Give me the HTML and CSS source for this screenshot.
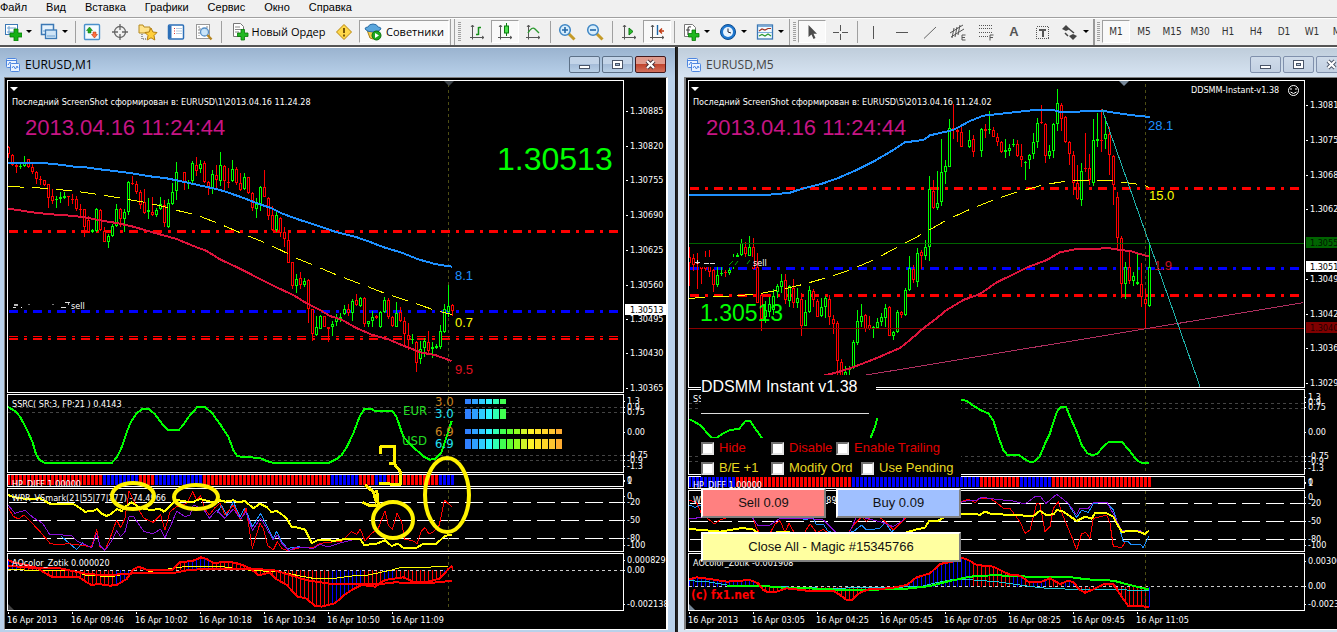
FILE: index.html
```
<!DOCTYPE html>
<html lang="ru">
<head>
<meta charset="utf-8">
<title>EURUSD</title>
<link rel="stylesheet" href="styles.css">
</head>
<body>
<nav class="menu">
  <a href="#">Файл</a><a href="#">Вид</a><a href="#">Вставка</a><a href="#">Графики</a><a href="#">Сервис</a><a href="#">Окно</a><a href="#">Справка</a>
</nav>
<div class="toolbar">
  <button class="tool drop" aria-label="Новый график"><svg width="18" height="18" viewBox="0 0 18 18"><rect x="1.500" y="1.500" width="12" height="10" fill="#fff" stroke="#3b78b5"/><path d="M3 5h9M3 9h9M5 3v8" stroke="#6ba0d0"/><path d="M10 6h4v4h4v4h-4v4h-4v-4H6v-4h4z" fill="#16b016" stroke="#067806" stroke-width=".8"/></svg><i class="caret"></i></button>
  <button class="tool drop wide" aria-label="Профили"><svg width="18" height="18" viewBox="0 0 18 18"><rect x="1.500" y="1.500" width="12" height="10" fill="#e6f2fc" stroke="#3b78b5" stroke-width="1.500"/><path d="M3 8h9" stroke="#6ba0d0"/><rect x="5.500" y="7" width="11" height="8.500" fill="#cfe4f6" stroke="#3b78b5" stroke-width="1.300"/><path d="M7 13h8" stroke="#6ba0d0"/></svg><i class="caret"></i></button>
  <i class="sep"></i>
  <button class="tool" aria-label="Обзор рынка"><svg width="18" height="18" viewBox="0 0 18 18"><rect x="1.500" y="1.500" width="15" height="15" rx="1" fill="#f4faff" stroke="#4a90cc" stroke-width="1.400"/><path d="M6.500 4l3 3.500H8V10H5V7.500H3.500z" fill="#22a822" stroke="#087008" stroke-width=".5"/><path d="M11.500 15l-3-3.500H10V9h3v2.500h1.500z" fill="#ff7040" stroke="#b02800" stroke-width=".5"/></svg></button>
  <button class="tool" aria-label="Окно данных"><svg width="18" height="18" viewBox="0 0 18 18" fill="none" stroke="#666"><circle cx="9" cy="9" r="5.500" stroke-width="1.300"/><path d="M9 1v6M9 11v6M1 9h6M11 9h6" stroke-width="1.300"/></svg></button>
  <button class="tool" aria-label="Навигатор"><svg width="20" height="20" viewBox="0 0 20 20"><path d="M1 3h4l1 2h6v6H1z" fill="#ffe38a" stroke="#b58a20"/><path d="M4 12v5h5" fill="none" stroke="#444" stroke-dasharray="1 1"/><path d="M13 6l1.900 4 4.100.5-3 3 .8 4.500-3.800-2.200L9.200 18l.8-4.500-3-3 4.100-.5z" fill="#ffcf3c" stroke="#b57f10"/></svg></button>
  <button class="tool" aria-label="Терминал"><svg width="18" height="18" viewBox="0 0 18 18"><rect x="1.500" y="2" width="15" height="14" rx="1" fill="#fff" stroke="#2c6fb8" stroke-width="1.500"/><path d="M2 2.500h2.500v13H2z" fill="#2c6fb8"/><path d="M7 5.500h1M7 8h1M7 10.500h1" stroke="#d33"/><path d="M9 5.500h6M9 8h6M9 10.500h6" stroke="#b8cce0"/></svg></button>
  <button class="tool" aria-label="Тестер"><svg width="18" height="18" viewBox="0 0 18 18"><rect x="1.500" y="1.500" width="13" height="14" fill="#fff" stroke="#999"/><path d="M4 3v10M4 6h8M12 3v5" stroke="#888" stroke-dasharray="2 1"/><circle cx="9.500" cy="9" r="4" fill="#bfe0f8" fill-opacity=".85" stroke="#5790c8" stroke-width="1.300"/><path d="M12.500 12l4 4.500" stroke="#b58520" stroke-width="2.400"/></svg></button>
  <i class="sep"></i>
  <button class="tool order"><svg width="18" height="18" viewBox="0 0 18 18"><path d="M2.500.5h7l3 3v10h-10z" fill="#fff" stroke="#777"/><path d="M4 4h5M4 6.500h7M4 9h4" stroke="#888"/><path d="M10 6.500h3.500V10H17v3.500h-3.500V17H10v-3.500H6.500V10H10z" fill="#20b820" stroke="#067806" stroke-width=".8"/></svg>Новый Ордер</button>
  <button class="tool small" aria-label="MetaEditor"><svg width="18" height="18" viewBox="0 0 18 18"><path d="M9 1.500L16.500 9 9 16.500 1.500 9z" fill="#ffd84a" stroke="#b8860b" stroke-linejoin="round"/><path d="M9 5v5M9 11.500v2" stroke="#6b4a00" stroke-width="1.800"/></svg></button>
  <button class="tool experts on"><svg width="18" height="18" viewBox="0 0 18 18"><path d="M3 7h12l-3 8q-3 2-6 0z" fill="#f2cc4d" stroke="#a87f18"/><path d="M1 6q0-2 3-2 1-3 5-3t5 3q3 0 3 2-2 3-8 3T1 6z" fill="#5aa6dc" stroke="#2c6fa8"/><circle cx="12.500" cy="12.500" r="4.500" fill="#1fa81f" stroke="#0a700a"/><path d="M11 10l4 2.500-4 2.500z" fill="#fff"/></svg>Советники</button>
  <i class="bars"></i><i class="grip"></i>
  <button class="tool" aria-label="Бары"><svg width="18" height="18" viewBox="0 0 18 18" fill="none" stroke="#555"><path d="M4.500 2v14.500M2 14.500h14M3 4l1.500-2L6 4M14 13l2 1.500-2 1.500"/><path d="M10.500 4v8M8 11.500h2.500M10.500 4.500H13" stroke="#16901a" stroke-width="1.500"/></svg></button>
  <button class="tool on" aria-label="Свечи"><svg width="18" height="18" viewBox="0 0 18 18" fill="none" stroke="#555"><path d="M4.500 2v14.500M2 14.500h14M3 4l1.500-2L6 4M14 13l2 1.500-2 1.500"/><path d="M10.500 0v13" stroke="#0b7a10"/><rect x="8.500" y="3" width="4" height="7" fill="#4fe04f" stroke="#0b7a10"/></svg></button>
  <button class="tool" aria-label="Линия"><svg width="18" height="18" viewBox="0 0 18 18" fill="none" stroke="#555"><path d="M4.500 2v14.500M2 14.500h14M3 4l1.500-2L6 4M14 13l2 1.500-2 1.500"/><path d="M4 10q4-7 7-4l4 4" stroke="#2c9a30" stroke-width="1.400"/></svg></button>
  <i class="sep"></i>
  <button class="tool" aria-label="Увеличить"><svg width="18" height="18" viewBox="0 0 18 18"><path d="M10.500 10.500l6 6" stroke="#c49a28" stroke-width="3"/><circle cx="7" cy="7" r="5.300" fill="#d8eefc" stroke="#3f86c4" stroke-width="1.500"/><path d="M7 4v6M4 7h6" stroke="#2468a8" stroke-width="1.600"/></svg></button>
  <button class="tool" aria-label="Уменьшить"><svg width="18" height="18" viewBox="0 0 18 18"><path d="M10.500 10.500l6 6" stroke="#c49a28" stroke-width="3"/><circle cx="7" cy="7" r="5.300" fill="#d8eefc" stroke="#3f86c4" stroke-width="1.500"/><path d="M4 7h6" stroke="#2468a8" stroke-width="1.600"/></svg></button>
  <i class="sep"></i>
  <button class="tool" aria-label="Автопрокрутка"><svg width="18" height="18" viewBox="0 0 18 18" fill="none" stroke="#555"><path d="M4.500 2v14.500M2 14.500h14M3 4l1.500-2L6 4M14 13l2 1.500-2 1.500"/><path d="M9 5l4 3.500L9 12z" fill="#2fc02f" stroke="#0b7a10"/></svg></button>
  <button class="tool on" aria-label="Сдвиг графика"><svg width="18" height="18" viewBox="0 0 18 18" fill="none" stroke="#555"><path d="M4.500 2v14.500M2 14.500h14M3 4l1.500-2L6 4M14 13l2 1.500-2 1.500"/><path d="M9.500 2v10" stroke="#1c68a8" stroke-width="1.400"/><path d="M16 8h-4M14 5.500L11.500 8l2.500 2.500" stroke="#c03810" stroke-width="1.400"/></svg></button>
  <i class="sep"></i>
  <button class="tool drop wide" aria-label="Индикаторы"><svg width="18" height="18" viewBox="0 0 18 18"><path d="M2.500 1.500h8l3 3v9h-11z" fill="#fff" stroke="#777"/><path d="M9 4q-3-1-3 2v6M4 7h4" fill="none" stroke="#444" stroke-width="1.200"/><path d="M10 7h3.500v3.500H17V14h-3.500v3.500H10V14H6.500v-3.500H10z" fill="#20b820" stroke="#067806" stroke-width=".8"/></svg><i class="caret"></i></button>
  <button class="tool drop wide" aria-label="Периоды"><svg width="18" height="18" viewBox="0 0 18 18"><circle cx="9" cy="9" r="7.500" fill="#1f78d0" stroke="#0c4c90"/><circle cx="9" cy="9" r="5" fill="#e8f4ff"/><path d="M9 5.500V9l3 1" fill="none" stroke="#223"/></svg><i class="caret"></i></button>
  <button class="tool drop wide" aria-label="Шаблоны"><svg width="18" height="18" viewBox="0 0 18 18"><rect x="1.500" y="2" width="15" height="14" fill="#f4faff" stroke="#3b78b5" stroke-width="1.300"/><path d="M2 3.500h14M2 9.500h14" stroke="#7db0dc"/><path d="M3 8l3-2 3 1 3-1.500h3" fill="none" stroke="#a03020" stroke-width="1.200"/><path d="M3 13l3-1.500 3 1.500 3-2 3 2" fill="none" stroke="#2c9a30" stroke-width="1.200"/></svg><i class="caret"></i></button>
  <i class="bar"></i><i class="grip"></i>
  <button class="tool on" aria-label="Курсор"><svg width="18" height="18" viewBox="0 0 18 18"><path d="M5.500 2v12l3-2.500 2 4.500 2-1-2-4.200h3.500z" fill="#4c4c4c"/></svg></button>
  <button class="tool" aria-label="Перекрестие"><svg width="18" height="18" viewBox="0 0 18 18" stroke="#555"><path d="M9.500 2v6M9.500 11v6M2 9.500h6M11 9.500h6"/></svg></button>
  <i class="sep"></i>
  <button class="tool" aria-label="Вертикальная линия"><svg width="18" height="18" viewBox="0 0 18 18" stroke="#555"><path d="M8.500 3v13"/></svg></button>
  <button class="tool" aria-label="Горизонтальная линия"><svg width="18" height="18" viewBox="0 0 18 18" stroke="#555"><path d="M3 9.500h12"/></svg></button>
  <button class="tool" aria-label="Трендовая линия"><svg width="18" height="18" viewBox="0 0 18 18" stroke="#666"><path d="M3 15.500L15 4"/></svg></button>
  <button class="tool" aria-label="Канал"><svg width="18" height="18" viewBox="0 0 18 18" fill="none" stroke="#555"><path d="M1 10L14 2M2 14L15 6M5 5L3 15M8 4L6 14M11 2L9 12"/><path d="M16.500 12H13v5h3.500M13 14.500h3"/></svg></button>
  <button class="tool" aria-label="Фибоначчи"><svg width="18" height="18" viewBox="0 0 18 18" fill="none" stroke="#555"><path d="M2 2.500h14M2 5.500h14M2 9.500h14M2 13.500h9" stroke-dasharray="1 1"/><path d="M16.500 12H13v5.500M13 14.500h3"/></svg></button>
  <button class="tool letter" aria-label="Текст">A</button>
  <button class="tool" aria-label="Метка"><svg width="18" height="18" viewBox="0 0 18 18" fill="none" stroke="#555" shape-rendering="crispEdges"><rect x="3.500" y="3.500" width="12" height="12" stroke-dasharray="1 1"/><path d="M6 7h7M9.500 6v8" stroke-width="2"/></svg></button>
  <button class="tool drop wide" aria-label="Стрелки"><svg width="18" height="18" viewBox="0 0 18 18"><path d="M1 6l4-4 4 4-4 2zM8 13l4-2 4 2-4 4z" fill="#444"/><path d="M4 10l3 3M8 6l5 4" stroke="#444" stroke-width="1.500"/></svg><i class="caret"></i></button>
  <i class="thick"></i><i class="grip"></i>
  <button class="tool tf on">M1</button><button class="tool tf">M5</button><button class="tool tf">M15</button><button class="tool tf">M30</button><button class="tool tf">H1</button><button class="tool tf">H4</button><button class="tool tf">D1</button><button class="tool tf">W1</button><button class="tool tf">MN</button>
</div>

<main class="desk">
  <section class="win active">
    <header class="title">
      <svg width="16" height="16" viewBox="0 0 16 16" fill="#eaf3ff" stroke="#4d86e0"><rect x="1.500" y="1.500" width="10" height="9" rx="1"/><path d="M2 3.500h9M3 8l2-3 2 3 2-2" fill="none"/><rect x="5.500" y="6.500" width="9" height="8" rx="1"/><path d="M7 11l1.500-2 2 3L12 9l1 2" fill="none"/></svg>
      <h2>EURUSD,M1</h2>
      <button class="cap" aria-label="Свернуть"><svg width="13" height="11" viewBox="0 0 13 11"><rect x="1.500" y="6.500" width="10" height="3" fill="#fff" stroke="#4a5568"/></svg></button>
      <button class="cap" aria-label="Развернуть"><svg width="13" height="11" viewBox="0 0 13 11"><rect x="1.500" y="1.500" width="10" height="8" fill="#fff" stroke="#4a5568"/><rect x="4.500" y="4.500" width="4" height="2" fill="#9db6d2" stroke="#4a5568"/></svg></button>
      <button class="cap close" aria-label="Закрыть"><svg width="13" height="11" viewBox="0 0 13 11"><path d="M3 2l7 7M10 2L3 9" stroke="#4a3038" stroke-width="4"/><path d="M3 2l7 7M10 2L3 9" stroke="#fff" stroke-width="2.200"/></svg></button>
    </header>
    <div class="chart">
      <div class="pane price"><svg class="plot" id="l1"></svg><svg class="axis" id="l1a"></svg></div>
      <div class="pane ssrc"><svg class="plot" id="l2"></svg><svg class="axis" id="l2a"></svg></div>
      <div class="pane diff"><svg class="plot" id="l3"></svg><svg class="axis" id="l3a"></svg></div>
      <div class="pane wpr"><svg class="plot" id="l4"></svg><svg class="axis" id="l4a"></svg></div>
      <div class="pane ao"><svg class="plot" id="l5"></svg><svg class="axis" id="l5a"></svg></div>
      <div class="times"><time>16 Apr 2013</time><time>16 Apr 09:46</time><time>16 Apr 10:02</time><time>16 Apr 10:18</time><time>16 Apr 10:34</time><time>16 Apr 10:50</time><time>16 Apr 11:09</time></div>
      <svg class="overlay" id="marks"></svg>
    </div>
  </section>
  <section class="win idle">
    <header class="title">
      <svg width="16" height="16" viewBox="0 0 16 16" fill="#eaf3ff" stroke="#4d86e0"><rect x="1.500" y="1.500" width="10" height="9" rx="1"/><path d="M2 3.500h9M3 8l2-3 2 3 2-2" fill="none"/><rect x="5.500" y="6.500" width="9" height="8" rx="1"/><path d="M7 11l1.500-2 2 3L12 9l1 2" fill="none"/></svg>
      <h2>EURUSD,M5</h2>
      <button class="cap" aria-label="Свернуть"><svg width="13" height="11" viewBox="0 0 13 11"><rect x="1.500" y="6.500" width="10" height="3" fill="#fff" stroke="#4a5568"/></svg></button>
      <button class="cap" aria-label="Развернуть"><svg width="13" height="11" viewBox="0 0 13 11"><rect x="1.500" y="1.500" width="10" height="8" fill="#fff" stroke="#4a5568"/><rect x="4.500" y="4.500" width="4" height="2" fill="#c2d0e0" stroke="#4a5568"/></svg></button>
      <button class="cap" aria-label="Закрыть"><svg width="13" height="11" viewBox="0 0 13 11"><path d="M3 2l7 7M10 2L3 9" stroke="#4a5568" stroke-width="4"/><path d="M3 2l7 7M10 2L3 9" stroke="#fff" stroke-width="2.200"/></svg></button>
    </header>
    <div class="chart">
      <div class="pane price"><svg class="plot" id="r1"></svg><svg class="axis" id="r1a"></svg></div>
      <div class="pane ssrc"><svg class="plot" id="r2"></svg><svg class="axis" id="r2a"></svg></div>
      <div class="pane diff"><svg class="plot" id="r3"></svg><svg class="axis" id="r3a"></svg></div>
      <div class="pane wpr"><svg class="plot" id="r4"></svg><svg class="axis" id="r4a"></svg></div>
      <div class="pane ao"><svg class="plot" id="r5"></svg><svg class="axis" id="r5a"></svg></div>
      <div class="times"><time>16 Apr 2013</time><time>16 Apr 03:05</time><time>16 Apr 04:25</time><time>16 Apr 05:45</time><time>16 Apr 07:05</time><time>16 Apr 08:25</time><time>16 Apr 09:45</time><time>16 Apr 11:05</time></div>
      <form class="trade">
        <h3>DDSMM Instant v1.38</h3>
        <div class="rule"></div>
        <div class="opts">
          <div class="row red"><label class="c1"><input type="checkbox">Hide</label><label class="c2"><input type="checkbox">Disable</label><label><input type="checkbox">Enable Trailing</label></div>
          <div class="row gold"><label class="c1"><input type="checkbox">B/E +1</label><label class="c3"><input type="checkbox">Modify Ord</label><label><input type="checkbox">Use Pending</label></div>
        </div>
        <div class="deal"><button type="button" class="sell">Sell 0.09</button><button type="button" class="buy">Buy 0.09</button></div>
        <button type="button" class="all">Close All - Magic #15345766</button>
      </form>
    </div>
  </section>
</main>
<script src="charts.js"></script>
</body>
</html>
```

FILE: styles.css
```
* { box-sizing: border-box; }
html, body { height: 100%; }
body {
  margin: 0;
  display: flex;
  flex-direction: column;
  overflow: hidden;
  background: #3c3c3c;
  font-family: "Open Sans", "Noto Sans", sans-serif;
  font-size: 12px;
  color: #000;
}
button { font: inherit; color: inherit; padding: 0; margin: 0; border: 0; background: none; }

.menu {
  flex: none;
  height: 18px;
  display: flex;
  gap: 19px;
  background: #f0f0f0;
  border-bottom: 1px solid #a0a0a0;
  font-family: "Liberation Sans", sans-serif;
  font-size: 11px;
  line-height: 15px;
}
.menu a { color: #000; text-decoration: none; white-space: nowrap; }

.toolbar {
  flex: none;
  height: 29px;
  display: flex;
  align-items: stretch;
  padding: 0 0 0 1px;
  overflow: hidden;
  background: #f0f0f0;
  border-top: 1px solid #fff;
  border-bottom: 2px solid #555;
}
.tool {
  flex: none;
  width: 28px;
  margin: 1px 0 2px;
  display: flex;
  align-items: center;
  justify-content: center;
}
.tool.on { background: #f9f9f9; border: 1px solid; border-color: #a0a0a0 #fff #fff #a0a0a0; }
.tool.drop { width: 34px; gap: 4px; }
.tool.wide { width: 37px; }
.tool.small { width: 24px; }
.tool.order { width: 108px; gap: 3px; font-size: 11px; white-space: nowrap; }
.tool.experts { width: 90px; margin-left: 3px; gap: 4px; font-size: 11px; }
.tool.letter { font: bold 13px "Liberation Sans", sans-serif; color: #555; }
.tool.tf { font: 10px "DejaVu Sans Condensed", "DejaVu Sans", sans-serif; color: #333; }
.caret { border: 3px solid transparent; border-top-color: #000; border-bottom: 0; }
.sep { flex: none; width: 1px; margin: 2px 2px 2px 3px; background: #a0a0a0; }
.bars { flex: none; width: 5px; margin: 0 1px; border: 1px solid #a0a0a0; border-width: 0 1px; }
.bar { flex: none; width: 1px; margin: 0 1px; background: #a0a0a0; }
.thick { flex: none; width: 2px; margin: 0; background: #999; }
.grip { flex: none; width: 3px; margin: 3px 2px; background: repeating-linear-gradient(#a0a0a0 0 1px, #f0f0f0 1px 2px); }

.desk { flex: 1; min-height: 0; display: grid; grid-template-columns: 676fr 661fr; grid-template-rows: minmax(0, 1fr); }
.win { display: flex; flex-direction: column; min-width: 0; }
.active { background: #b9d1ea; border-right: 1px solid #111; padding: 0 7px 0 4px; }
.idle { background: #d7e4f2; border-left: 2px solid #222; padding: 0 8px 0 6px; width: calc(100% + 20px); }
.title {
  flex: none;
  height: 30px;
  display: flex;
  align-items: center;
  gap: 2px;
  border-top: 1px solid #fff;
}
.active .title { background: linear-gradient(#9ab3cf, #b9d1ea); margin: 0 -7px 0 -4px; padding: 4px 9px 0 5px; }
.idle .title { background: linear-gradient(#bfcddb, #d7e4f2); margin: 0 -8px 0 -6px; padding: 4px 10px 0 8px; }
.title h2 { flex: 1; margin: 0; padding-left: 2px; font-size: 12px; line-height: 16px; font-weight: 400; }
.idle h2 { color: #444; }
.cap {
  width: 31px;
  height: 17px;
  display: grid;
  place-items: center;
  border: 1px solid #5d7188;
  border-radius: 2px;
  background: linear-gradient(#c3d4e8 50%, #a5bcd8 50%, #b8cfe6);
}
.idle .cap { border-color: #8090ac; background: linear-gradient(#cfdbe9, #c2d0e2); }
.cap.close { border-color: #43191d; background: linear-gradient(#e09b8e 50%, #c1452f 50%, #d2705c); }

.chart {
  position: relative;
  display: flex;
  flex-direction: column;
  gap: 1px;
  padding: 2px 0 0 2px;
  background: #000;
  border-top: 1px solid #808080;
  border-left: 1px solid #808080;
  border-right: 2px solid #fff;
  border-bottom: 1px solid #fff;
}
.idle .chart { border-left-width: 2px; }
.pane { flex: none; display: grid; grid-template-columns: minmax(0, 1fr) 42px; grid-template-rows: minmax(0, 1fr); }
.plot { display: block; width: 100%; height: 100%; min-height: 0; border: 1px solid #fff; }
.axis { display: block; width: 42px; height: 100%; min-height: 0; overflow: visible; }
.active .price { height: 313px; }
.active .ssrc { height: 79px; }
.active .diff { height: 13px; }
.active .wpr { height: 64px; }
.idle .price { height: 308px; }
.idle .ssrc { height: 86px; }
.idle .diff { height: 13px; }
.idle .wpr { height: 62px; }
.ao { height: 58px; }
.times { flex: none; display: flex; height: 17px; }
.times time {
  flex: none;
  width: 64px;
  padding-top: 2px;
  white-space: nowrap;
  color: #fff;
  font: 9px/12px "DejaVu Sans Condensed", "DejaVu Sans", sans-serif;
  background: linear-gradient(#fff, #fff) 1px 0 / 1px 2px no-repeat;
}
.overlay { position: absolute; left: 0; top: 0; width: 100%; height: 100%; pointer-events: none; }

svg text { font-family: "Liberation Sans", sans-serif; }
svg .tiny { font: 9px "DejaVu Sans Condensed", "DejaVu Sans", sans-serif; fill: #fff; }
svg .meter { font: 13px "DejaVu Sans Condensed", "DejaVu Sans", sans-serif; }
svg .copy { font: bold 12px "DejaVu Sans Condensed", "DejaVu Sans", sans-serif; fill: #f00; }
svg .tag { font-size: 13px; }
svg .clock { font-size: 22px; fill: #c71585; }
svg .huge { font-size: 32px; fill: #0f0; }
svg .big { font-size: 23px; fill: #0f0; }

.trade { position: absolute; left: 15px; top: 297px; width: 260px; font: 13px/20px "Liberation Sans", sans-serif; color: #111; }
.trade h3 { margin: 0; width: 175px; height: 19px; font-size: 16px; line-height: 24px; font-weight: 400; color: #fff; background: #000; white-space: nowrap; }
.rule { height: 24px; background: linear-gradient(#ddd, #ddd) 0 19px / 168px 1px no-repeat #000; }
.opts { margin-top: 20px; height: 39px; background: #000; }
.row { display: flex; }
.row label { display: flex; align-items: center; gap: 5px; white-space: nowrap; }
.row .c1 { width: 70px; }
.row .c2 { width: 65px; }
.row .c3 { width: 90px; }
.row input { appearance: none; width: 13px; height: 13px; margin: 0; background: #fff; border: 2px solid; border-color: #707070 #e4e4e4 #e4e4e4 #707070; }
.red { color: #e00000; }
.gold { color: #e8d820; }
.deal { display: flex; gap: 10px; margin-top: 11px; }
.deal button, .all { flex: 1; width: 100%; height: 30px; border: 2px solid; border-color: #fff #808080 #808080 #fff; }
.sell { background: #ff8080; }
.buy { background: #a0c0ff; }
.all { margin-top: 14px; background: #ffffa0; }
```

FILE: charts.js
```
const NS = "http://www.w3.org/2000/svg";
const STEP = 3; // data points per pixel

function add(parent, tag, attrs, text) {
  const el = document.createElementNS(NS, tag);
  for (const k in attrs) el.setAttribute(k, attrs[k]);
  if (text !== undefined) el.textContent = text;
  parent.appendChild(el);
  return el;
}
function layer(id, ox, oy, bx, by) {
  const g = add(document.getElementById(id), "g", { transform: `translate(${-ox},${-oy})` });
  return { g, bx, by };
}
const parse = s => s.trim().split(/\s+/).map(p => p.split(",").map(Number));
const X = (c, v) => c.bx + v / STEP;
const Y = (c, v) => c.by + v / STEP;
function line(c, s, stroke, w) {
  add(c.g, "polyline", { points: parse(s).map(p => X(c, p[0]) + "," + Y(c, p[1])).join(" "), fill: "none", stroke, "stroke-width": w, "shape-rendering": "crispEdges", "stroke-linejoin": "round" });
}
function at(pts, x) {
  for (let i = 1; i < pts.length; i++) {
    if (x <= pts[i][0]) {
      const [a, b] = [pts[i - 1], pts[i]];
      return a[1] + (b[1] - a[1]) * (x - a[0]) / (b[0] - a[0]);
    }
  }
  return pts[pts.length - 1][1];
}
function dashed(c, s, stroke) {
  const pts = parse(s), end = pts[pts.length - 1][0];
  for (let x = pts[0][0]; x < end; x += 72) {
    const stop = Math.min(x + 53, end), seg = [];
    for (let u = x; u <= stop; u += 6) seg.push(u + "," + at(pts, u));
    if (seg.length > 1) line(c, seg.join(" "), stroke, 1);
  }
}
function hline(c, y, x1, x2, stroke, w, dash) {
  add(c.g, "line", { x1, x2, y1: y, y2: y, stroke, "stroke-width": w, "stroke-dasharray": dash || "none", "shape-rendering": "crispEdges" });
}
function vline(c, x, y1, y2) {
  add(c.g, "line", { x1: x + .5, x2: x + .5, y1, y2, stroke: "#4d4d14", "stroke-dasharray": "3 3", "shape-rendering": "crispEdges" });
}
function rect(c, x, y, width, height, fill) {
  add(c.g, "rect", { x, y, width, height, fill, "shape-rendering": "crispEdges" });
}
function text(c, x, y, t, cls, fill) {
  const el = add(c.g, "text", { x, y, class: cls }, t);
  if (fill) el.style.fill = fill;
}
function candles(c, x0, s) {
  s.trim().split(/\s+/).forEach((t, i) => {
    if (t === "-") return;
    const col = t[0] === "R" ? "#f00" : "#0f0";
    const [h, l, a, b] = t.slice(1).split(",").map(v => Math.round(Y(c, Number(v))));
    const x = x0 + 4 * i;
    rect(c, x, h, 1, Math.max(1, l - h), col);
    if (b - a < 3) rect(c, x - 1, a, 3, Math.max(1, b - a), col);
    else {
      rect(c, x - 1, a, 3, b - a, col);
      rect(c, x, a + 1, 1, b - a - 2, "#000");
    }
  });
}
function runs(s) {
  const out = [];
  s.split(" ").forEach(r => { for (let i = 0; i < parseInt(r.slice(1)); i++) out.push(r[0] === "R" ? "#f00" : "#00f"); });
  return out;
}
function strip(c, x0, y, s) {
  runs(s).forEach((col, i) => rect(c, x0 - 1 + 4 * i, y, 3, 10, col));
}
function hist(c, x0, zero, s, colors) {
  const pts = parse(s), z = Y(c, zero);
  runs(colors).forEach((col, i) => {
    const x = x0 + 4 * i, y = Y(c, at(pts, (x - c.bx) * STEP));
    rect(c, x, Math.min(y, z), 1, Math.abs(y - z), col);
  });
}
function scale(c, x, items) {
  items.forEach(([y, t]) => {
    rect(c, x - 4, y, 2, 1, "#fff");
    text(c, x, y + 3, t, "tiny");
  });
}
function tri(c, x, y, fill, w) {
  add(c.g, "path", { d: `M${x - w} ${y}h${2 * w}l${-w} ${w}z`, fill });
}

/* EURUSD,M1 */
let c = layer("l1", 8, 81, 0, 80);
vline(c, 448, 84, 392);
tri(c, 449, 81, "#3c4248", 5);
hline(c, 231.5, 9, 619, "#f00", 3, "9 6 3 6");
hline(c, 311.5, 9, 619, "#00f", 3, "9 6 3 6");
hline(c, 336.5, 9, 619, "#f00", 1, "9 6 3 6");
hline(c, 339, 9, 619, "#f00", 2, "9 6 3 6");
candles(c, 8, `R198,235,201,222 R222,258,226,255 R252,278,256,262 G253,266,259,262 G228,262,247,257 R237,265,237,262 R252,282,262,277 R272,312,277,297 R288,315,297,299 R299,318,300,314
R312,384,312,353 R328,372,349,362 G348,383,356,361 G336,370,352,358 G337,357,348,355 R347,378,347,350 R343,372,356,358 R347,392,357,386 R372,410,386,388 R387,470,388,440
R407,458,420,455 G447,459,451,456 G384,457,388,452 R387,452,390,450 R441,487,452,485 G463,503,468,487 G432,470,437,469 G373,441,388,437 R385,440,388,418 G387,456,396,418
G303,404,307,395 R288,315,308,311 R303,342,311,335 R330,388,337,375 R327,402,367,398 G355,417,390,395 R350,408,397,405 G384,411,390,406 G351,391,373,388 R360,441,375,430
G357,445,370,440 G308,376,337,373 G246,360,275,334 - R275,331,277,305 G300,327,305,311 G243,308,250,303 R231,288,256,273 G240,280,253,268 R243,308,250,305
R302,346,305,320 G270,342,282,327 R256,324,286,301 G216,317,256,304 R256,335,258,303 R265,325,305,310 G240,305,268,303 R262,315,267,310 R280,333,310,330 G280,330,292,328
R290,342,292,340 R336,393,338,384 G354,413,372,386 G318,392,322,372 R270,350,322,350 R352,420,355,407 R377,452,404,451 G391,455,405,451 R410,470,415,458 R442,500,455,476
R453,550,480,550 R545,628,547,619 G582,638,598,617 R576,627,595,614 G594,621,602,616 R598,728,601,686 R686,782,688,763 G709,767,742,765 G705,747,708,746 R707,741,709,740
R740,785,740,746 G724,767,733,742 G702,738,712,726 G698,725,710,716 G676,706,688,702 R672,707,687,700 G658,723,662,700 R642,678,660,676 G651,680,655,677 R652,740,655,731
G722,742,724,733 G692,742,712,722 R704,717,709,714 G692,743,697,742 G651,700,660,695 R655,716,661,711 R708,740,711,737 G665,742,698,740 R681,727,697,722 R712,795,722,762
R730,810,765,780 G763,792,777,780 R783,876,785,848 G782,852,806,838 G773,832,784,805 R753,820,785,812 G787,833,800,808 G792,806,797,803 G735,807,754,800 G673,760,688,757
G615,710,677,695 R672,707,674,692`);
line(c, "24,248 130,249 160,252 190,255 210,259 250,261 300,268 350,274 390,279 450,289 500,295 540,303 580,312 640,325 670,333 720,350 780,373 810,383 850,402 900,420 950,436 1005,455 1065,470 1105,484 1155,503 1205,518 1255,538 1305,552 1355,560", "#1e90ff", 2);
dashed(c, "24,319 77,322 140,325 168,328 220,333 293,343 365,355 440,368 500,382 530,391 580,403 605,411 655,430 725,460 800,490 862,520 890,535 940,555 1015,587 1085,613 1155,640 1230,665 1300,689 1357,704", "#ff0");
line(c, "24,386 60,391 90,396 140,402 200,406 250,411 300,421 350,429 400,440 440,452 480,463 530,477 580,498 620,513 660,538 720,566 780,597 830,622 880,645 920,670 960,690 990,708 1025,719 1065,742 1115,764 1165,778 1215,799 1265,818 1305,825 1355,843", "#dc143c", 2);
tri(c, 14, 87, "#fff", 4);
text(c, 12, 105, "Последний ScreenShot сформирован в: EURUSD\\1\\2013.04.16 11.24.28", "tiny");
text(c, 25, 135, "2013.04.16 11:24:44", "clock");
text(c, 497, 170, "1.30513", "huge");
text(c, 455, 280, "8.1", "tag", "#1e90ff");
text(c, 455, 327, "0.7", "tag", "#ff0");
text(c, 455, 374, "9.5", "tag", "#e01020");
text(c, 71, 309, "sell", "tiny");
rect(c, 14, 304, 4, 2, "#bbb"); rect(c, 13, 307, 3, 1, "#ddd"); rect(c, 21, 307, 1, 1, "#fff"); rect(c, 28, 304, 2, 1, "#777");
rect(c, 52, 304, 2, 1, "#777"); rect(c, 61, 307, 5, 1, "#ddd"); rect(c, 65, 302, 5, 1, "#ddd"); rect(c, 68, 303, 1, 2, "#bbb");

c = layer("l1a", 624, 80, 0, 80);
scale(c, 630, [[111, "1.30885"], [146, "1.30820"], [180, "1.30755"], [215, "1.30690"], [250, "1.30625"], [285, "1.30560"], [319, "1.30495"], [353, "1.30430"], [388, "1.30365"]]);
rect(c, 625, 304, 41, 11, "#fff");
text(c, 630, 313, "1.30513", "tiny", "#000");

c = layer("l2", 8, 395, 0, 385);
[407.5, 412.5, 455.5, 460.5].forEach(y => hline(c, y, 8, 624, "#444", 1, "3 3"));
vline(c, 448, 396, 472);
line(c, "24,66 45,78 60,95 78,128 97,170 108,207 118,224 135,234 335,234 350,218 365,187 380,142 392,112 410,85 427,72 447,72 465,88 485,115 503,134 537,134 550,120 565,97 592,66 615,66 635,83 660,117 685,155 700,195 712,214 780,219 800,228 820,234 985,234 1010,222 1025,210 1040,187 1060,145 1080,92 1093,72 1115,72 1125,78 1177,78 1190,97 1210,155 1240,187 1273,216 1290,224 1305,222 1323,205 1335,170 1355,108", "#0f0", 2);
text(c, 12, 407, "SSRC( SR:3, FP:21 ) 0.4143", "tiny");
text(c, 403, 415, "EUR", "meter", "#22dd22");
text(c, 402, 445, "USD", "meter", "#22dd22");
text(c, 435, 406, "3.0", "meter", "#c88420");
text(c, 435, 418, "3.0", "meter", "#20e0f0");
text(c, 435, 436, "6.9", "meter", "#c88420");
text(c, 435, 448, "6.9", "meter", "#20e0f0");
const heat = ["#2f80ff", "#2fa0ff", "#2fccff", "#2ff4ff", "#2fffb4", "#40ff50", "#60ff30", "#90ff20", "#d0f428", "#fff428", "#ffe428", "#ffd428", "#ffc430", "#ffac30"];
[[399, 5, 6], [409, 10, 6], [429, 5, 14], [439, 10, 14]].forEach(([y, h, n]) => {
  for (let i = 0; i < n; i++) rect(c, 465 + 7 * i, y, 6, h, heat[i]);
});
c = layer("l2a", 624, 394, 0, 385);
scale(c, 627, [[401, "1.3"], [407, "0.9"], [412, "0.75"], [432, "0.00"], [455, "-0.75"], [460, "-0.9"], [466, "-1.3"]]);

c = layer("l3", 8, 475, 0, 385);
strip(c, 8, 475, "R24 B9 R4 B12 R32 B7 R4 B3 R13 B4");
text(c, 12, 487, "HP_DIFF 1.00000", "tiny");
c = layer("l3a", 624, 474, 0, 385);
scale(c, 627, [[480, "0"], [481, "1"]]);

c = layer("l4", 8, 489, 0, 385);
[502.5, 520.5, 538.5].forEach(y => hline(c, y, 9, 624, "#fff", 1, "18 6"));
vline(c, 448, 490, 551);
line(c, "182,452 200,468 230,494 250,470", "#1e90ff", 1);
line(c, "650,385 665,360 680,392 700,350 720,395 735,368 757,425 782,385 800,420 820,462 830,438 845,470 862,490 900,485", "#1e90ff", 1);
line(c, "24,368 40,394 55,402 72,390 90,408 120,440 150,475 175,480 200,476 225,478 250,482 275,485 290,434 300,485 315,496 330,460 350,405 362,428 375,400 387,318 398,340 415,372 432,400 460,412 482,390 495,435 510,380 530,365 560,355 578,320 590,345 602,332 615,372 628,390 645,368 660,355 675,390 700,360 722,405 738,370 757,490 780,415 790,430 803,482 820,495 832,470 845,490 862,497 910,486 940,488 960,475 1025,468 1055,440 1070,448 1081,432 1095,468 1115,445 1135,430 1155,377 1165,420 1177,433 1191,385 1205,410 1213,462 1240,468 1252,476 1263,440 1275,428 1287,447 1300,440 1318,420 1333,345 1355,365", "#f00", 1);
line(c, "24,360 45,385 75,376 100,398 128,415 148,447 215,452 230,468 275,488 290,445 300,482 315,496 335,468 350,438 362,455 375,440 387,395 400,394 432,440 460,446 482,432 495,458 515,415 530,378 555,395 570,390 580,360 610,372 628,400 650,375 675,400 700,372 722,402 738,380 757,436 782,400 800,430 820,465 832,450 845,475 867,497 890,486 940,490 960,478 985,486 1020,474 1055,465 1085,460", "#8a10d8", 1);
line(c, "24,330 40,336 60,340 90,342 120,340 148,356 220,357 235,366 255,380 280,378 290,372 305,386 320,393 335,386 350,372 365,378 380,362 395,352 420,368 450,375 480,372 492,380 510,362 530,345 560,350 580,350 600,342 640,352 660,346 675,350 700,346 715,352 735,348 760,370 780,356 800,366 815,382 830,377 845,388 860,400 875,426 895,428 915,434 935,474 955,465 1005,467 1035,462 1080,462 1093,480 1130,476 1155,466 1175,483 1193,476 1210,488 1250,488 1267,478 1310,476 1335,452 1357,450", "#ff0", 2);
text(c, 12, 501, "WPR_VSmark(21|55|77|277) -74.4966", "tiny");
c = layer("l4a", 624, 488, 0, 385);
scale(c, 627, [[496, "0"], [502, "-20"], [520, "-50"], [538, "-80"], [545, "-100"]]);

c = layer("l5", 8, 554, 0, 385);
const aoL = "24,525 40,532 80,540 110,548 145,570 160,577 238,577 260,592 275,600 295,597 330,602 350,600 380,582 400,553 415,545 445,556 515,556 540,532 580,527 603,517 620,522 640,534 685,530 720,537 750,550 775,570 790,568 810,562 825,580 860,600 895,637 915,638 945,662 965,665 1005,655 1030,632 1060,612 1085,600 1125,605 1155,585 1210,577 1240,590 1280,592 1320,580 1345,552 1357,542";
hist(c, 8, 555, aoL, "B3 R24 B4 R8 B2 R4 B6 R30 B8 R5 B3 R12 B1 R2");
hline(c, 570.5, 8, 624, "#ccc", 1, "3 3");
vline(c, 448, 556, 610);
line(c, "24,554 120,556 220,556 260,572 340,574 400,562 440,562 470,556 520,550 560,544 660,544 730,554 850,562 900,573 940,580 1005,580 1055,573 1105,570 1175,555 1200,548 1245,547 1343,545", "#ff0", 1);
line(c, aoL, "#f00", 2);
line(c, "24,542 90,548 180,550 250,565 300,570 370,568 400,565 515,565 560,556 610,552 760,552 820,555 870,570 920,586 1005,598 1135,598 1185,592 1255,595 1315,592 1357,587", "#f00", 2);
text(c, 12, 566, "AOcolor_Zotik 0.000020", "tiny");
add(c.g, "path", { d: "M8 604l6 6h-6z", fill: "#444" });
c = layer("l5a", 624, 553, 0, 385);
scale(c, 627, [[560, "0.000829"], [570, "0.00"], [604, "-0.002138"]]);

c = layer("marks", 5, 78, 335, 385);
[[133, 496, 21, 13], [196, 497, 22, 12], [393, 520, 20, 18], [447, 495, 22, 37]].forEach(([cx, cy, rx, ry]) =>
  add(c.g, "ellipse", { cx, cy, rx, ry, fill: "none", stroke: "#fff200", "stroke-width": 4 }));
["135,207 137,185 180,184 179,236 162,236", "180,240 198,262 196,298 132,296", "90,300 115,320 125,355", "82,352 100,360 128,362", "125,315 130,360"].forEach(s => line(c, s, "#fff200", 3));

/* EURUSD,M5 */
c = layer("r1", 689, 81, 680, 80);
vline(c, 1145, 84, 387);
tri(c, 1124, 81, "#778899", 5);
hline(c, 188.5, 690, 1300, "#f00", 3, "9 6 3 6");
hline(c, 268.5, 690, 1300, "#00f", 3, "9 6 3 6");
hline(c, 295.5, 690, 1300, "#f00", 3, "9 6 3 6");
candles(c, 689, `R500,618,530,550 R522,572,535,554 R520,627,550,553 R542,612,555,568 R514,572,545,568 R510,590,553,577 R566,637,570,616 G560,620,586,616 G560,587,578,583 R570,590,577,580
G563,585,571,580 G523,566,545,552 G520,535,525,530 G477,528,490,524 R487,530,500,522 G468,528,502,528 R473,565,502,567 R520,670,560,669 R640,752,645,718 G663,728,690,710
G650,710,672,695 G627,706,648,690 G611,655,617,637 G582,640,603,620 R582,673,600,661 G615,680,617,663 R597,685,625,670 G623,685,655,670 R640,768,658,737 G660,738,695,737
G617,700,629,695 R627,680,633,661 R658,712,662,710 G655,712,680,708 G648,715,655,680 R645,735,658,712 R705,763,717,732 R723,887,730,843 R838,893,845,890 G857,895,875,890
G858,893,868,870 G780,867,787,864 G690,795,723,790 G672,742,708,727 R703,757,706,746 R708,750,736,746 G738,773,742,748 G715,748,727,743 G700,737,712,725 G672,740,685,713
R678,768,682,767 G752,780,757,767 G690,758,697,755 R693,714,697,705 G625,708,629,706 G528,632,565,629 R556,610,568,600 G503,620,520,605 R510,567,515,527 G481,541,500,527
G288,542,328,500 R300,387,333,383 G273,390,368,383 G177,377,275,365 G240,313,258,275 G117,262,145,260 R72,177,145,148 R142,185,150,155 R140,202,155,200 -
G150,205,180,202 R165,230,178,217 - G143,230,148,214 R132,175,148,152 G92,162,148,151 R140,172,150,170 R158,198,170,185 R183,220,185,217 G178,234,210,215
G193,228,203,213 G178,202,192,196 R180,230,193,227 R193,260,228,240 G243,300,245,250 G222,267,224,240 G160,237,185,223 G113,205,130,185 R75,132,125,130 R130,250,132,227
G195,238,212,227 G130,233,133,213 G27,153,70,132 R70,153,76,118 R108,190,110,185 R182,255,185,222 R213,345,224,310 R255,360,310,357 G248,378,272,361 R158,275,264,267
R222,315,265,300 G116,318,179,310 G100,200,178,182 R88,215,180,183 G112,207,163,178 R142,285,162,224 R225,374,227,316 R335,510,350,475 R468,653,475,612 G545,657,562,612
R512,612,562,603 G575,617,588,604 G520,615,607,612 R550,680,612,652 R627,745,658,673 G493,680,562,677`);
hline(c, 243.5, 689, 1304, "#006400", 1);
hline(c, 328.5, 689, 1304, "#8b0000", 1);
line(c, "28,345 100,346 210,346 285,343 330,338 370,325 420,313 470,296 530,270 580,245 640,210 675,187 730,180 750,166 820,150 870,123 910,107 990,98 1056,91 1120,90 1140,96 1190,96 1220,92 1270,93 1330,102 1370,107 1410,111", "#1e90ff", 2);
dashed(c, "28,655 80,652 150,648 225,643 300,630 370,613 440,593 510,570 580,540 655,500 690,482 730,460 800,420 870,388 945,358 990,343 1010,337 1060,323 1085,316 1110,311 1165,303 1250,300 1300,303 1340,308 1395,316 1408,323", "#ff0");
line(c, "405,893 460,880 510,865 560,846 600,830 660,804 690,780 730,745 770,715 800,690 850,660 900,642 950,607 990,588 1040,563 1100,540 1140,517 1190,507 1290,505 1320,510 1350,513 1380,522 1408,530", "#dc143c", 2);
line(c, "517,892 1870,668", "#b03060", 1);
line(c, "1266,88 1560,920", "#20b2aa", 1);
tri(c, 695, 87, "#fff", 4);
text(c, 693, 105, "Последний ScreenShot сформирован в: EURUSD\\5\\2013.04.16 11.24.02", "tiny");
text(c, 706, 135, "2013.04.16 11:24:44", "clock");
text(c, 1191, 93, "DDSMM-Instant-v1.38", "tiny");
add(c.g, "circle", { cx: 1293.5, cy: 90.5, r: 5, fill: "none", stroke: "#fff" });
add(c.g, "path", { d: "M1291 88v2M1296 88v2M1290.500 92q3 3 6 0", fill: "none", stroke: "#fff" });
text(c, 700, 321, "1.30513", "big");
text(c, 1148, 130, "28.1", "tag", "#1e90ff");
text(c, 1149, 200, "15.0", "tag", "#ff0");
text(c, 1154, 270, "1.9", "tag", "#c81020");
add(c.g, "path", { d: "M699 257h54v10h-54z", fill: "#000" });
rect(c, 695, 262, 5, 1, "#ddd"); rect(c, 697, 260, 1, 4, "#ddd"); rect(c, 704, 263, 5, 1, "#ddd"); rect(c, 710, 263, 5, 1, "#ddd");
add(c.g, "path", { d: "M729 265l4-4M735 265l3-4M747 264l3-4", stroke: "#0a0" });
text(c, 753, 266, "sell", "tiny");

c = layer("r1a", 1305, 80, 680, 80);
scale(c, 1310, [[105, "1.30814"], [140, "1.30750"], [175, "1.30685"], [209, "1.30620"], [279, "1.30490"], [314, "1.30425"], [348, "1.30360"], [383, "1.30295"]]);
[[237, "#006400", "1.30556", "#001400"], [261, "#fff", "1.30513", "#000"], [322, "#800000", "1.30401", "#200000"]].forEach(([y, bg, t, fg]) => {
  rect(c, 1306, y, 41, 11, bg);
  text(c, 1310, y + 9, t, "tiny", fg);
});

c = layer("r2", 689, 390, 680, 370);
[403.5, 408.5, 456.5, 461.5].forEach(y => hline(c, y, 689, 1304, "#444", 1, "3 3"));
vline(c, 1145, 390, 474);
text(c, 693, 402, "SSRC( SR:3, FP:21 ) -0.8", "tiny");
line(c, "28,147 60,165 80,187 95,203 110,203 125,193 150,180 177,177 197,152 210,152 225,175 247,205", "#0f0", 2);
line(c, "572,203 585,170 592,145", "#0f0", 2);
line(c, "843,90 860,92 880,107 905,122 925,130 940,152 955,200 970,240 981,254 1015,254 1035,268 1050,276 1060,276 1078,262 1100,210 1110,190 1120,157 1130,127 1142,110 1158,110 1170,140 1190,185 1205,225 1222,250 1235,255 1250,253 1270,230 1285,217 1325,215 1345,238 1370,270 1385,279 1408,279", "#0f0", 2);
c = layer("r2a", 1305, 389, 680, 370);
scale(c, 1308, [[397, "1.3"], [402, "0.9"], [407, "0.75"], [432, "0.00"], [456, "-0.75"], [461, "-0.9"], [468, "-1.3"]]);

c = layer("r3", 689, 477, 680, 370);
strip(c, 689, 477, "B12 R29 B32 R10 B8 R25");
text(c, 693, 488, "HP_DIFF 1.00000", "tiny");
c = layer("r3a", 1305, 476, 680, 370);
scale(c, 1308, [[482, "0"], [483, "1"]]);

c = layer("r4", 689, 491, 680, 370);
[503.5, 521.5, 539.5].forEach(y => hline(c, y, 690, 1304, "#fff", 1, "18 6"));
vline(c, 1145, 491, 551);
line(c, "28,405 45,412 64,405", "#1e90ff", 1);
line(c, "360,445 375,448 400,445 410,465 430,463 445,485 490,490 520,485 545,465 560,480 600,475 615,457 635,485 665,455 700,420", "#1e90ff", 1);
line(c, "1165,402 1190,443 1205,420 1225,428 1240,400 1280,397 1300,420 1320,480 1330,515 1345,515 1355,525 1380,522 1390,533 1408,497", "#1e90ff", 1);
line(c, "28,390 50,398 64,430 85,447 103,462 120,450 150,440 215,435 230,475 240,490 270,490 285,462 300,452 315,487 327,460 345,492 372,490 390,462 410,488 430,478 450,495 500,495 525,460 545,440 560,455 580,430 610,450 640,480 660,460 680,440 720,420 800,400 843,395 865,388 885,398 900,385 930,385 950,398 970,415 990,415 1020,455 1035,490 1050,480 1070,400 1080,403 1095,485 1110,470 1120,415 1135,395 1150,440 1175,500 1190,540 1205,490 1218,488 1230,505 1240,445 1280,435 1290,460 1300,530 1325,532 1335,518", "#f00", 1);
line(c, "28,447 64,442 215,440 235,468 270,465 300,445 380,445 430,450 460,480 475,495 505,495 530,440 560,445 600,455 640,470 670,450 680,420 750,400 843,397 870,390 885,393 905,382 950,388 1000,393 1035,402 1065,380 1080,378 1098,400 1130,373 1165,400 1190,435 1200,415 1225,415 1240,397 1280,396 1305,440 1325,480 1380,482 1395,493", "#8a10d8", 1);
line(c, "28,476 60,480 90,482 120,485 150,480 180,475 215,476 232,487 250,492 300,486 340,488 420,495 520,500 640,500 680,487 710,478 735,473 748,452 775,452 800,437 840,432 870,432 900,434 915,425 935,432 981,434 1015,435 1040,438 1060,438 1080,422 1098,435 1120,433 1132,420 1150,425 1165,435 1190,453 1215,440 1235,446 1245,430 1280,430 1300,440 1310,460 1325,485 1370,483 1395,492 1408,481", "#ff0", 2);
text(c, 693, 503, "WPR_VSmark(21|55|77|277) -84.8966", "tiny");
c = layer("r4a", 1305, 490, 680, 370);
scale(c, 1308, [[497, "0"], [503, "-20"], [521, "-50"], [539, "-80"], [545, "-100"]]);

c = layer("r5", 689, 554, 680, 370);
const aoR = "28,628 50,622 90,627 140,635 210,630 235,640 250,660 265,667 290,665 320,655 380,662 460,662 480,675 500,690 515,690 540,668 570,657 630,655 680,645 710,622 750,610 780,582 830,572 845,563 865,570 890,585 940,590 970,605 990,614 1020,617 1045,635 1080,637 1110,625 1140,642 1165,632 1180,637 1200,660 1215,668 1240,658 1270,643 1300,642 1325,680 1345,708 1408,710";
hist(c, 689, 650, aoR, "B17 R36 B18 R10 B3 R2 B4 R4 B3 R18 B1");
hline(c, 586.5, 689, 1304, "#ccc", 1, "3 3");
vline(c, 1145, 554, 610);
line(c, "28,632 80,635 140,645 240,648 440,655 620,652 720,650 760,640 820,628 880,630 950,635 1040,648 1100,655 1180,658 1300,658 1380,662 1408,663", "#20c8d8", 1);
line(c, "140,647 240,647 320,654 420,656 480,660 550,660 680,656 750,648 800,635 870,620 950,615 981,618 1120,622 1160,620 1220,628 1300,632 1350,645 1408,659", "#0f0", 2);
line(c, aoR, "#f00", 2);
text(c, 693, 566, "AOcolor_Zotik -0.001908", "tiny");
text(c, 691, 599, "(c) fx1.net", "copy");
add(c.g, "path", { d: "M689 604l6 6h-6z", fill: "#778899" });
c = layer("r5a", 1305, 553, 680, 370);
scale(c, 1308, [[561, "0.003006"], [586, "0.00"], [604, "-0.002345"]]);
```
